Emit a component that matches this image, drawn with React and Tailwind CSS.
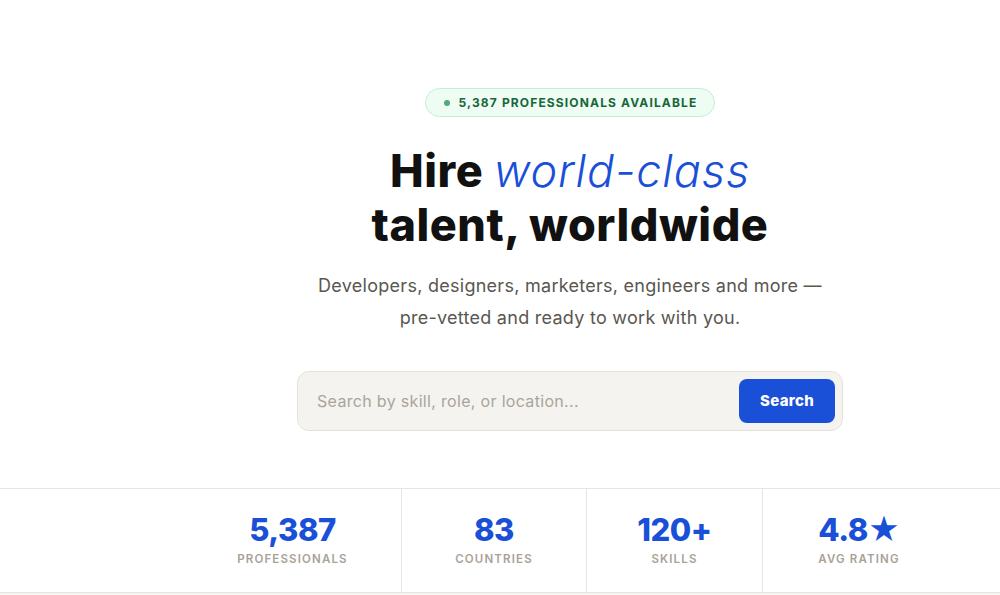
import React from "react";

const font = { fontFamily: "Inter, 'Noto Sans', sans-serif" };

function Stat({ value, label, w, last }) {
  return (
    <div
      className={`flex flex-col items-center justify-center pt-[2px] ${w} ${last ? "" : "border-r border-[#e8e5dd]"}`}
    >
      <div className="text-[31px] font-extrabold leading-none text-[#1a4fd8] tracking-[-0.015em]">{value}</div>
      <div className="mt-[6px] text-[11.5px] font-semibold tracking-[0.1em] text-[#a9a297]">{label}</div>
    </div>
  );
}

export default function App() {
  return (
    <div className="min-h-[595px] bg-white" style={font}>
      <section className="flex flex-col items-center pl-[140px] pt-[88px]">
        <div className="flex h-[29px] items-center gap-[9px] rounded-full border border-[#c4efd2] bg-[#eefcf3] pl-[18px] pr-[17px]">
          <span className="h-[6px] w-[6px] rounded-full bg-[#52a97b]" />
          <span className="text-[12px] font-bold tracking-[0.095em] text-[#17673a]">5,387 PROFESSIONALS AVAILABLE</span>
        </div>
        <h1 className="mt-[27px] text-center text-[45px] font-extrabold leading-[54px] tracking-[0.012em] text-[#111111]">
          Hire <span className="font-light italic tracking-[0.02em] text-[#1a4fd8]">world-class</span>
          <br />
          talent, worldwide
        </h1>
        <p className="mt-[18px] text-center text-[18px] font-normal leading-[32px] tracking-[0.015em] text-[#5a5650]">
          Developers, designers, marketers, engineers and more —
          <br />
          pre-vetted and ready to work with you.
        </p>
        <div className="mt-[37px] flex h-[60px] w-[546px] items-center rounded-[12px] border border-[#e6e2da] bg-[#f5f3ef] pl-[19px] pr-[7px]">
          <span className="flex-1 text-[16px] tracking-[0.02em] text-[#aaa49b]">Search by skill, role, or location...</span>
          <button className="h-[44px] w-[96px] rounded-[8px] bg-[#1a4fd8] text-[15px] font-extrabold tracking-[0.02em] text-white">Search</button>
        </div>
      </section>
      <div className="mt-[57px] border-y border-[#e8e5dd]">
        <div className="flex h-[103px] pl-[184px]">
          <Stat value="5,387" label="PROFESSIONALS" w="w-[218px]" />
          <Stat value="83" label="COUNTRIES" w="w-[185px]" />
          <Stat value="120+" label="SKILLS" w="w-[176px]" />
          <Stat value="4.8★" label="AVG RATING" w="w-[192px]" last />
        </div>
      </div>
      <div className="h-[20px] bg-[#f6f5f1]" />
    </div>
  );
}
